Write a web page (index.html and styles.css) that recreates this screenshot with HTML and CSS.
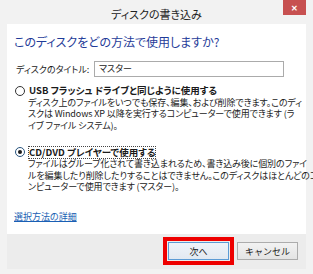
FILE: index.html
```html
<!DOCTYPE html>
<html lang="ja">
<head>
    <meta charset="UTF-8">
    <title>ディスクの書き込み</title>
    <link rel="stylesheet" href="styles.css">
</head>
<body>
    <div class="window">
        <div class="titlebar">
            <span class="titlebar__text">ディスクの書き込み</span>
            <span class="titlebar__close">&#x2715;</span>
        </div>
        <div class="panel">
            <div class="content">
                <h1 class="heading">このディスクをどの方法で使用しますか?</h1>
                <div class="titlerow">
                    <label class="titlerow__label" for="disctitle">ディスクのタイトル:</label>
                    <div class="titlerow__input" id="disctitle">マスター</div>
                </div>
                <div class="option">
                    <div class="option__head">
                        <span class="radio"></span>
                        <span class="option__label">USB フラッシュ ドライブと同じように使用する</span>
                    </div>
                    <p class="option__desc">ディスク上のファイルをいつでも保存、編集、および削除できます。このディ<br>スクは Windows XP 以降を実行するコンピューターで使用できます (ラ<br>イブ ファイル システム)。</p>
                </div>
                <div class="option option--second">
                    <div class="option__head">
                        <span class="radio radio--checked"></span>
                        <span class="option__label option__label--focus">CD/DVD プレイヤーで使用する</span>
                    </div>
                    <p class="option__desc">ファイルはグループ化されて書き込まれるため、書き込み後に個別のファイ<br>ルを編集したり削除したりすることはできません。このディスクはほとんどのコ<br>ンピューターで使用できます (マスター)。</p>
                </div>
                <a class="morelink" href="#">選択方法の詳細</a>
            </div>
            <div class="footer">
                <button class="btn btn--default">次へ</button>
                <button class="btn">キャンセル</button>
            </div>
        </div>
    </div>
</body>
</html>
```

FILE: styles.css
```css
body {
    margin: 0;
    font-family: "Noto Sans CJK JP", "Noto Sans", sans-serif;
    font-feature-settings: "palt";
    font-size: 9px;
    color: #1a1a1a;
    background-color: #f2f2f2;
}

.window {
    width: 313px;
    height: 274px;
    display: flex;
    flex-direction: column;
    position: relative;
    background-color: #f2f2f2;
}

.titlebar {
    height: 24px;
    display: flex;
    align-items: center;
    justify-content: center;
}

.titlebar__text {
    font-size: 11px;
    color: #222;
    margin-top: 3px;
}

.titlebar__close {
    position: absolute;
    top: 0;
    right: 7px;
    width: 23px;
    height: 15px;
    background-color: #c75050;
    color: #fff;
    font-size: 8px;
    font-weight: bold;
    display: flex;
    align-items: center;
    justify-content: center;
}

.panel {
    margin: 0 7px;
    height: 245px;
    background-color: #fff;
    display: flex;
    flex-direction: column;
}

.content {
    flex: 1;
    padding: 10px 0 0 7px;
}

.heading {
    margin: 0;
    font-size: 12px;
    line-height: 16px;
    font-weight: normal;
    color: #1f3c99;
}

.titlerow {
    display: flex;
    align-items: center;
    margin-top: 11px;
    padding-left: 2px;
}

.titlerow__label {
    width: 78px;
}

.titlerow__input {
    width: 184px;
    height: 14px;
    line-height: 14px;
    padding-left: 4px;
    border: 1px solid #ababab;
}

.option {
    margin-top: 7.5px;
    padding-left: 1px;
}

.option--second {
    margin-top: 15px;
}

.option__head {
    display: flex;
    align-items: center;
    height: 12px;
}

.radio {
    width: 8px;
    height: 8px;
    border: 1px solid #333;
    border-radius: 50%;
    margin-right: 4px;
    display: flex;
    align-items: center;
    justify-content: center;
    box-sizing: content-box;
}

.radio--checked {
    border-color: #26527c;
}

.radio--checked::after {
    content: "";
    width: 4px;
    height: 4px;
    border-radius: 50%;
    background-color: #1a1a1a;
}

.option__label {
    font-weight: bold;
    font-size: 9.5px;
    line-height: 11px;
}

.option__label--focus {
    outline: 1px dotted #444;
}

.option__desc {
    width: max-content;
    margin: 0;
    padding-left: 13px;
    line-height: 11.5px;
    letter-spacing: -0.1px;
    white-space: nowrap;
    color: #222;
}

.morelink {
    display: block;
    width: max-content;
    margin-top: 18.5px;
    line-height: 11px;
    color: #1a5fb4;
    text-decoration: underline;
}

.footer {
    height: 35px;
    background-color: #ececec;
    display: flex;
    justify-content: flex-end;
    align-items: flex-start;
    gap: 8px;
    padding: 8px 8px 0 0;
    box-sizing: border-box;
}

.btn {
    width: 61px;
    height: 18px;
    padding: 0;
    font-family: inherit;
    font-size: 9px;
    color: #1a1a1a;
    border: 1px solid #acacac;
    background: linear-gradient(#f2f2f2, #e4e4e4);
}

.btn--default {
    border-color: #5b9bd5;
    background: linear-gradient(#eef3f9, #e2e9f1);
    outline: 4px solid #ee0000;
    outline-offset: 1px;
}
```
